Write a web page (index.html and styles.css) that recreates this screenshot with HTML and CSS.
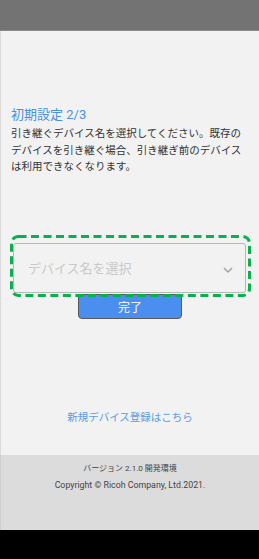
FILE: index.html
```html
<!DOCTYPE html>
<html lang="ja">
<head>
<meta charset="utf-8">
<link rel="stylesheet" href="styles.css">
</head>
<body>
<div class="screen">
  <div class="topbar"></div>
  <main class="main">
    <h1 class="title">初期設定 2/3</h1>
    <p class="desc">引き継ぐデバイス名を選択してください。既存のデバイスを引き継ぐ場合、引き継ぎ前のデバイスは利用できなくなります。</p>
    <div class="select-wrap">
      <div class="select">
        <span class="placeholder">デバイス名を選択</span>
        <svg class="chev" width="10" height="6" viewBox="0 0 10 6"><path d="M1 1 L5 5 L9 1" fill="none" stroke="#a0a0a0" stroke-width="1.4"/></svg>
      </div>
      <svg class="highlight" width="241" height="62" viewBox="0 0 241 62"><rect x="1.5" y="1.5" width="238" height="59" rx="7" ry="7" fill="none" stroke="#0ab04e" stroke-width="3" stroke-dasharray="8 4.5"/></svg>
    </div>
    <div class="btn-row"><button class="btn">完了</button></div>
    <a class="link">新規デバイス登録はこちら</a>
  </main>
  <footer class="footer">
    <div class="ver">バージョン 2.1.0 開発環境</div>
    <div class="copy">Copyright © Ricoh Company, Ltd.2021.</div>
  </footer>
  <div class="navbar"></div>
</div>
</body>
</html>
```
FILE: styles.css
```css
html, body {
  margin: 0;
  padding: 0;
}
body {
  font-family: Roboto, "Noto Sans CJK JP", sans-serif;
  background: #000;
}
.screen {
  width: 259px;
  height: 559px;
  display: flex;
  flex-direction: column;
}
.topbar {
  height: 31px;
  background: #737373;
  border-bottom: 1px solid #8a8a8a;
  box-sizing: border-box;
  flex: none;
}
.main {
  flex: 1;
  background: #f2f2f2;
  border-left: 1px solid #dadada;
  display: flex;
  flex-direction: column;
}
.title {
  margin: 76px 0 0 10px;
  font-size: 13px;
  line-height: 16px;
  font-weight: normal;
  color: #4a90e2;
}
.desc {
  margin: 3px 8px 0 10px;
  font-size: 10.5px;
  line-height: 16.5px;
  color: #333;
}
.select-wrap {
  position: relative;
  margin: 67px 13px 0 12px;
}
.select {
  height: 50px;
  box-sizing: border-box;
  border: 1px solid #b8b8b8;
  border-radius: 3px;
  display: flex;
  align-items: center;
  justify-content: space-between;
  padding: 0 12px 0 14px;
}
.placeholder {
  font-size: 13px;
  color: #c9c9c9;
  margin-top: -1px;
}
.chev {
  margin-top: 4px;
}
.highlight {
  position: absolute;
  top: -8px;
  left: -3px;
  pointer-events: none;
}
.btn-row {
  display: flex;
  justify-content: center;
  margin-top: 1px;
}
.btn {
  width: 104px;
  height: 25px;
  background: #4a8ef0;
  border: 1px solid #5a5a5a;
  border-radius: 4px;
  color: #fff;
  font-family: inherit;
  font-size: 12px;
  padding: 0;
}
.link {
  margin-top: 91px;
  text-align: center;
  font-size: 10.5px;
  line-height: 16px;
  color: #5a9ae6;
}
.footer {
  height: 75px;
  flex: none;
  background: #dcdcdc;
  border-left: 1px solid #cfcfcf;
  text-align: center;
  line-height: 16px;
  color: #444;
  padding-top: 6px;
  box-sizing: border-box;
}
.ver {
  font-size: 8px;
}
.copy {
  font-size: 8.8px;
}
.navbar {
  height: 29px;
  flex: none;
  background: #000;
}
```
